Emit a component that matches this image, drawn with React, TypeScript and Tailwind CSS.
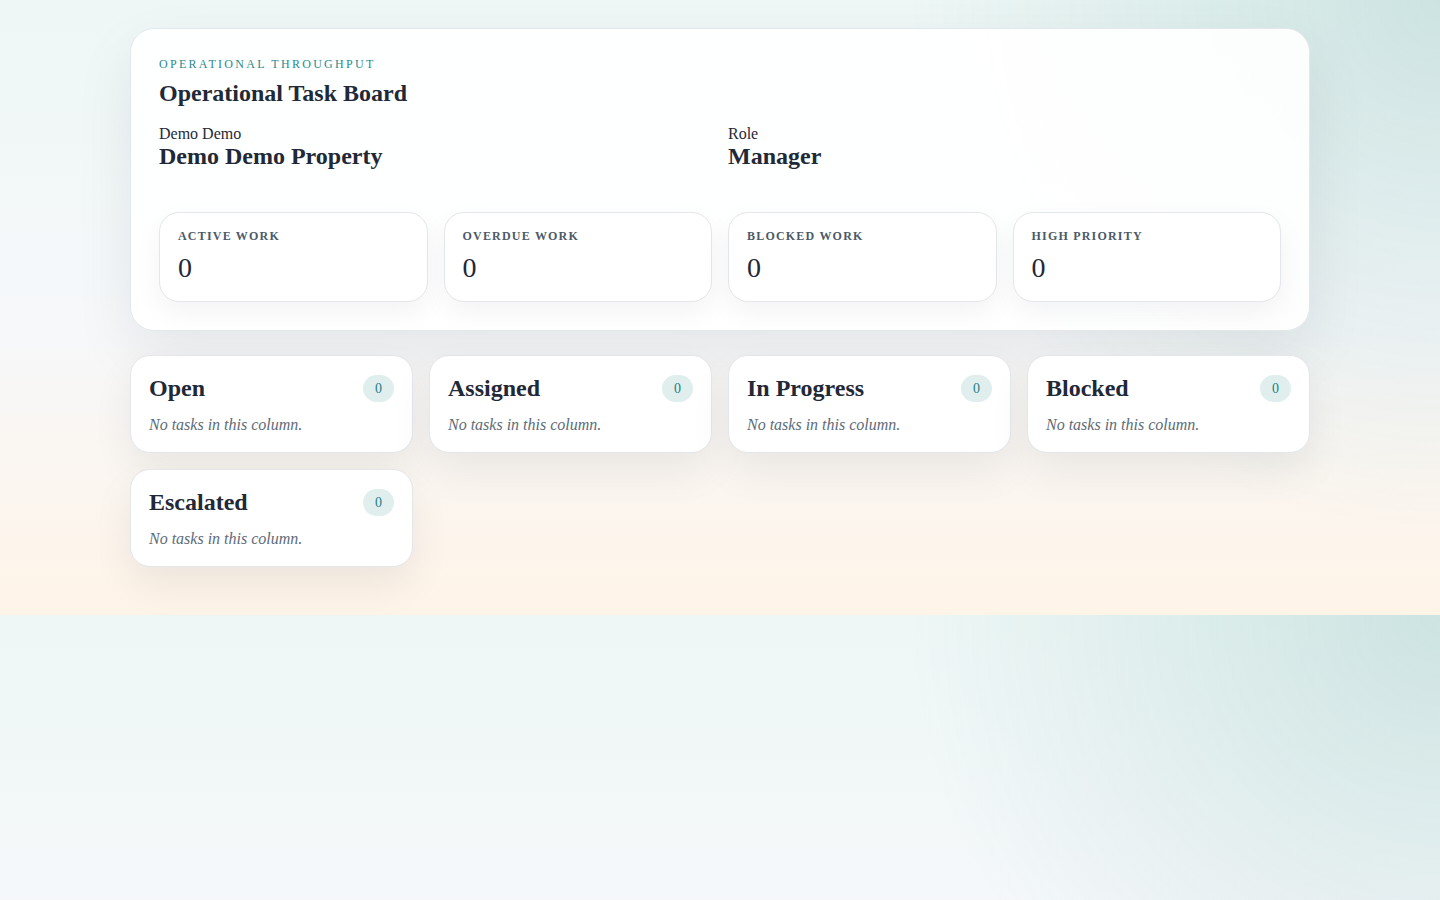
import React from "react";

const stats = ["Active Work", "Overdue Work", "Blocked Work", "High Priority"];
const columns = ["Open", "Assigned", "In Progress", "Blocked", "Escalated"];

export default function App() {
  return (
    <div className="min-h-screen bg-[radial-gradient(circle_at_top_right,rgba(15,118,110,0.15),transparent_34%),linear-gradient(180deg,#eef7f6_0%,#f6f8fa_52%,#fff4e8_100%)] bg-[length:100%_615px] bg-repeat-y font-['Liberation_Serif',serif] text-[#1f2937]">
      <div className="mx-auto w-[1180px] pt-7 pb-12">
        <section className="rounded-[24px] border border-[#e3e8ec] bg-[rgba(255,255,255,0.92)] p-7 shadow-[0_24px_60px_rgba(15,23,42,0.08)]">
          <div className="mt-[1px] text-[12px] leading-none uppercase tracking-[0.19em] text-[#2a8a8f]">
            Operational Throughput
          </div>
          <h1 className="mt-[8px] text-[24px] leading-[30px] font-bold text-[#1f2937]">
            Operational Task Board
          </h1>
          <div className="mt-4 grid grid-cols-2 gap-4">
            <div>
              <div className="text-[16px] leading-5 text-[#1f2937]">Demo Demo</div>
              <div className="text-[24px] leading-6 font-bold text-[#1f2937]">Demo Demo Property</div>
            </div>
            <div>
              <div className="text-[16px] leading-5 text-[#1f2937]">Role</div>
              <div className="text-[24px] leading-6 font-bold text-[#1f2937]">Manager</div>
            </div>
          </div>
          <div className="mt-11 grid grid-cols-4 gap-4">
            {stats.map((s) => (
              <div
                key={s}
                className="rounded-[20px] border border-[#e3e6ea] bg-white px-[18px] pt-[17px] pb-[19px] shadow-[0_10px_28px_rgba(15,23,42,0.05)]"
              >
                <div className="text-[12px] leading-none font-bold uppercase tracking-[0.1em] text-[#4b5a68]">
                  {s}
                </div>
                <div className="mt-[12px] text-[28px] leading-[28px] text-[#1f2937]">0</div>
              </div>
            ))}
          </div>
        </section>

        <div className="mt-6 grid grid-cols-4 gap-4">
          {columns.map((c) => (
            <div
              key={c}
              className="rounded-[20px] border border-[#e3e6ea] bg-white px-[18px] pt-[18px] pb-[15px] shadow-[0_18px_40px_rgba(15,23,42,0.07)]"
            >
              <div className="flex h-7 items-center justify-between">
                <h2 className="text-[24px] leading-7 font-bold text-[#1f2937]">{c}</h2>
                <span className="flex h-[27px] w-[31px] items-center justify-center rounded-full bg-[#e0eeee] text-[14px] text-[#1f7f86]">
                  0
                </span>
              </div>
              <p className="mt-[11px] text-[16px] leading-6 italic text-[#5d6b78]">No tasks in this column.</p>
            </div>
          ))}
        </div>
      </div>
    </div>
  );
}
